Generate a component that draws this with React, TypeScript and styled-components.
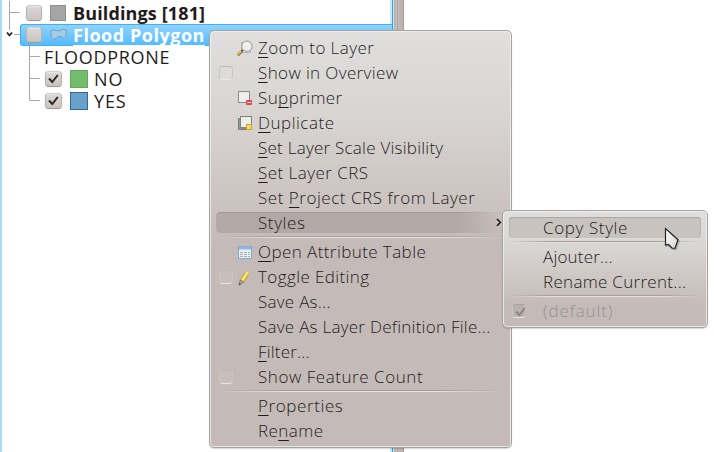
import React from 'react';
import styled, { createGlobalStyle, css } from 'styled-components';

const GlobalStyle = createGlobalStyle`
  * { box-sizing: border-box; }
  body { margin: 0; background: #fff; overflow: hidden; }
`;

const Desktop = styled.main`
  position: relative;
  display: flex;
  width: 714px;
  height: 452px;
  overflow: hidden;
  background: #fff;
  color: #1f1c1b;
  font-family: 'Open Sans', 'Noto Sans', sans-serif;
  font-size: 17px;
`;

const LayerPanel = styled.section`
  width: 393px;
  height: 452px;
  padding-top: 2px;
  border-left: 2px solid #a4dbf8;
  border-right: 1px solid #2fa6e2;
  box-shadow: inset -2px 0 #c2e9fa;
`;

const Splitter = styled.div`
  width: 11px;
  background: linear-gradient(90deg, #dcd8d5 0 1px, #bcb3b0 1px 3px, #cbc3c0 3px 4px, #aaa19e 4px 5px, #c8c0bd 5px 6px, #bdb4b1 6px 10px, #a69e9b 10px);
`;

const TreeRow = styled.div`
  display: flex;
  align-items: center;
  height: 22px;
`;

const SelectedArea = styled.div`
  display: flex;
  align-items: center;
  flex: 1;
  height: 22px;
  padding-left: 5px;
  border-radius: 3px 0 0 3px;
  border: 1px solid #43aff0;
  border-right: 0;
  background: linear-gradient(#8ed3ff, #55bcfc);
`;

const Guide = styled.svg`
  flex: none;
  fill: none;
  stroke: #a9a9a9;
`;

const Box = styled.span<{ $small?: boolean; $gap: number }>`
  display: flex;
  flex: none;
  width: ${p => (p.$small ? 16 : 17)}px;
  height: 16px;
  margin-right: ${p => p.$gap}px;
  border: 1px solid #c2bebb;
  border-color: #d3d0ce #b9b4b1 #9f9996;
  border-radius: 4px;
  background: linear-gradient(#dbd8d5, #cac4c0);
  box-shadow: 0 0 1px #aaa, inset 0 1px #e8e6e4;
`;

const Swatch = styled.span<{ $fill: string; $edge: string; $size: number; $gap: number }>`
  flex: none;
  width: ${p => p.$size}px;
  height: ${p => p.$size}px;
  margin-right: ${p => p.$gap}px;
  border: 1px solid ${p => p.$edge};
  background: ${p => p.$fill};
`;

const TreeText = styled.span<{ $bold?: boolean; $track?: number }>`
  font-size: 18px;
  line-height: 22px;
  white-space: pre;
  font-weight: ${p => (p.$bold ? 700 : 400)};
  letter-spacing: ${p => p.$track ?? 0}px;
`;

const SelectedText = styled(TreeText)`
  height: 21px;
  margin-bottom: -1px;
  line-height: 20px;
  color: #fff;
  border-bottom: 1px solid #fff;
`;

const Menu = styled.div<{ $x: number; $y: number; $w: number; $h: number; $flat: number }>`
  position: absolute;
  left: ${p => p.$x}px;
  top: ${p => p.$y}px;
  width: ${p => p.$w}px;
  height: ${p => p.$h}px;
  padding: 5px 6px 3px;
  border: 1px solid #a5a3a2;
  border-radius: 5px;
  background: linear-gradient(#e0dfdd, #d8d4d1 ${p => p.$flat * 0.4}px, #c4bbb8 ${p => p.$flat}px);
  box-shadow: inset 0 0 0 1px rgba(244, 243, 242, 0.75), 0 1px 1px rgba(0, 0, 0, 0.16);
`;

const Row = styled.div<{ $state?: 'open' | 'hover'; $disabled?: boolean; $sub?: boolean }>`
  position: relative;
  display: grid;
  grid-template-columns: ${p => (p.$sub ? '34px 1fr' : '21px 21px 1fr 10px')};
  align-items: center;
  height: 25px;
  color: ${p => (p.$disabled ? '#98918e' : '#1f1c1b')};
  ${p => p.$state && css`
    &::before {
      content: '';
      position: absolute;
      inset: 1px 0 3px;
      border-radius: 4px;
      ${p.$state === 'open'
        ? css`
            background: #b2a9a6;
            box-shadow: inset 0 1px #a29a97, 0 1px #d5cfcc;
            mask-image: linear-gradient(90deg, #000 242px, transparent 288px);
          `
        : css`
            background: #c9c3c0;
            box-shadow: inset 0 1px #aca6a3, inset 1px 0 #bbb5b2, inset -1px 0 #bbb5b2, 0 1px #dfdcda;
          `}
    }
  `}
`;

const Slot = styled.span`
  display: flex;
  align-items: center;
`;

const Label = styled.span<{ $track: number }>`
  position: relative;
  line-height: 23px;
  padding-bottom: 2px;
  white-space: pre;
  font-weight: 300;
  letter-spacing: ${p => p.$track}px;
`;

const Mnemonic = styled.u`
  text-decoration: underline 1px;
  text-underline-offset: 3px;
  text-decoration-skip-ink: none;
`;

const Separator = styled.hr`
  width: 100%;
  height: 4px;
  margin: 0;
  border: 0;
  background:
    linear-gradient(90deg, transparent, #a69e9b 22%, #a69e9b 78%, transparent) 0 0 / 100% 1px no-repeat,
    linear-gradient(90deg, transparent, #e4e1df 22%, #e4e1df 78%, transparent) 0 1px / 100% 1px no-repeat;
`;

const MenuCheck = styled.span<{ $inset?: number; $filled?: boolean }>`
  display: flex;
  width: 14px;
  height: 14px;
  margin: 0 0 1px ${p => p.$inset ?? 3}px;
  border: 1px solid #c0bab7;
  border-color: ${p => (p.$filled ? '#aaa3a0' : '#bdb7b4')} #cbc6c3 #e9e6e4;
  border-radius: 4px;
  background: ${p => (p.$filled ? '#bab2af' : 'rgba(255, 255, 255, 0.06)')};
`;

const Glyph = styled.svg`
  display: block;
  position: relative;
  flex: none;
  overflow: visible;
`;

const Pointer = styled.svg`
  position: absolute;
  left: 663px;
  top: 225px;
  overflow: visible;
`;

const Tick = ({ color = '#292625' }: { color?: string }) => (
  <Glyph width="15" height="14" viewBox="0 0 15 14" fill="none">
    <path d="M3 6.5 L6.3 10 L11.8 3" stroke={color} strokeWidth="2" />
  </Glyph>
);

const icons: Record<string, React.ReactNode> = {
  zoom: (
    <>
      <rect x="4.5" y="1.5" width="9" height="10" fill="#e9e9e8" stroke="#b5b5b4" />
      <path d="M6 9 L4.4 10.6" stroke="#444" strokeWidth="2" />
      <path d="M4.5 10.5 L.8 14.2" stroke="#8f7030" strokeWidth="2.8" />
      <path d="M4.3 10.2 L.7 13.8" stroke="#efbd45" strokeWidth="1.6" />
      <circle cx="10" cy="5.2" r="5.2" fill="#eeeeed" fillOpacity=".9" stroke="#9b9b9a" />
      <path d="M7 4 Q8 1.8 10.5 1.7" stroke="#fff" fill="none" />
    </>
  ),
  remove: (
    <>
      <rect x="1.5" y=".5" width="11" height="11" fill="#eeeeed" stroke="#858a86" />
      <rect x="9" y="9" width="6" height="5" rx="1" fill="#ef4048" />
      <path d="M10 11.5 H14" stroke="#fff" />
    </>
  ),
  duplicate: (
    <>
      <path d="M1.5 2.5 H4 V12 H9 V13.5 H1.5Z" fill="#969b97" stroke="#777b78" />
      <rect x="3.5" y=".5" width="11" height="11" fill="#eeeeed" stroke="#7d827e" />
      <rect x="9.5" y="8.5" width="5" height="5" fill="#f2db70" stroke="#c9a41f" />
    </>
  ),
  table: (
    <>
      <rect x="1.5" y="1.5" width="13" height="12" fill="#f1f3f5" stroke="#79a9d3" />
      <path d="M2 3 H14" stroke="#8eb9df" strokeWidth="3" />
      <path d="M2 5 H14" stroke="#c8dfef" />
      <path d="M3 7.5H6 M7 7.5H10 M11 7.5H13 M3 9.5H6 M7 9.5H10 M11 9.5H13 M3 11.5H6 M7 11.5H10 M11 11.5H13" stroke="#9fabb5" />
    </>
  ),
  pencil: (
    <>
      <path d="M2 15 L3.5 10 L9 1 L12.5 3 L7 12Z" fill="#e3c832" stroke="#ad9940" strokeWidth=".7" />
      <path d="M5.2 10.5 L10.6 2" stroke="#fff18a" strokeWidth="1.5" />
      <path d="M2 15 L3.4 10 L7 12Z" fill="#aaa69c" stroke="#77736c" strokeWidth=".7" />
      <path d="M9 1 L12.5 3 L11.8 4.2 L8.2 2.3Z" fill="#e3d9a3" />
      <path d="M1.5 15.5 L2.3 12.8 L4 14Z" fill="#555" />
    </>
  ),
};

type Entry = {
  pre?: string;
  key?: string;
  rest: string;
  track: number;
  icon?: string;
  check?: boolean;
  open?: boolean;
};

const groups: Entry[][] = [
  [
    { key: 'Z', rest: 'oom to Layer', track: 0.42, icon: 'zoom' },
    { key: 'S', rest: 'how in Overview', track: 0.38, check: true },
    { pre: 'Su', key: 'p', rest: 'primer', track: 0.4, icon: 'remove' },
    { key: 'D', rest: 'uplicate', track: 0.5, icon: 'duplicate' },
    { key: 'S', rest: 'et Layer Scale Visibility', track: 0.24 },
    { key: 'S', rest: 'et Layer CRS', track: 0.46 },
    { pre: 'Set ', key: 'P', rest: 'roject CRS from Layer', track: 0.53 },
    { rest: 'Styles', track: 0.6, open: true },
  ],
  [
    { key: 'O', rest: 'pen Attribute Table', track: 0.42, icon: 'table' },
    { rest: 'Toggle Editing', track: 0.4, icon: 'pencil', check: true },
    { rest: 'Save As...', track: 0.26 },
    { rest: 'Save As Layer Definition File...', track: 0.26 },
    { key: 'F', rest: 'ilter...', track: 0.2 },
    { rest: 'Show Feature Count', track: 0.55, check: true },
  ],
  [
    { key: 'P', rest: 'roperties', track: 0.6 },
    { pre: 'Re', key: 'n', rest: 'ame', track: 0.45 },
  ],
];

const MenuEntry = ({ e }: { e: Entry }) => (
  <Row $state={e.open ? 'open' : undefined}>
    <Slot>{e.check && <MenuCheck />}</Slot>
    <Slot>{e.icon && <Glyph width="16" height="16" viewBox="0 0 16 16">{icons[e.icon]}</Glyph>}</Slot>
    <Label $track={e.track}>
      {e.pre}
      {e.key && <Mnemonic>{e.key}</Mnemonic>}
      {e.rest}
    </Label>
    {e.open && (
      <Glyph width="7" height="10" viewBox="0 1 7 10" fill="none">
        <path d="M2 2.5 L5.5 6 L2 9.5" stroke="#e6e3e1" strokeWidth="1" />
        <path d="M2 1 L5.3 4.5 L2 8" stroke="#1f1c1b" strokeWidth="1.7" />
      </Glyph>
    )}
  </Row>
);

export default function App() {
  return (
    <Desktop>
      <GlobalStyle />
      <LayerPanel>
        <TreeRow>
          <Guide width="24" height="24" viewBox="2 1 24 24"><path d="M9.5 0 V25 M9.5 12.5 H20" /></Guide>
          <Box $gap={8} $small />
          <Swatch $fill="#a5a5a5" $edge="#8f8f8f" $size={16} $gap={7} />
          <TreeText $bold $track={0.13}>Buildings [181]</TreeText>
        </TreeRow>
        <TreeRow>
          <Guide width="18" height="22" viewBox="2 24 18 22">
            <path d="M9.5 24 V30 M14 34.5 H20" />
            <path d="M7 32.5 L9.5 35.5 L12 32.5" stroke="#1f1c1b" strokeWidth="1.7" />
          </Guide>
          <SelectedArea>
            <Box $gap={8} $small />
            <Glyph width="23" height="14" viewBox="0 0 23 14">
              <path d="M1 3 Q2 .8 6 2.5 Q9 3.5 11 2 Q14 0 16 2 Q17.5 4 15.5 6.5 Q17.5 9 14.5 10.5 Q12 10.5 11 8.5 Q7.5 7.5 6 10.5 Q3 12.5 1.5 9.5 Q.5 6 1 3Z" fill="#a6cce5" stroke="#6f9fbd" />
            </Glyph>
            <SelectedText $bold $track={0.53}>Flood Polygon</SelectedText>
          </SelectedArea>
        </TreeRow>
        <TreeRow>
          <Guide width="42" height="22" viewBox="2 46 42 22"><path d="M29.5 46 V68 M29.5 56.5 H40" /></Guide>
          <TreeText $track={0.7}>FLOODPRONE</TreeText>
        </TreeRow>
        <TreeRow>
          <Guide width="43" height="22" viewBox="2 68 43 22"><path d="M29.5 68 V90 M29.5 78.5 H40" /></Guide>
          <Box $gap={8}><Tick /></Box>
          <Swatch $fill="#74bd6d" $edge="#62a75c" $size={18} $gap={6} />
          <TreeText $track={0.9}>NO</TreeText>
        </TreeRow>
        <TreeRow>
          <Guide width="43" height="22" viewBox="2 90 43 22"><path d="M29.5 90 V100.5 H40" /></Guide>
          <Box $gap={8}><Tick /></Box>
          <Swatch $fill="#67a1cc" $edge="#33688f" $size={18} $gap={6} />
          <TreeText $track={0.9}>YES</TreeText>
        </TreeRow>
      </LayerPanel>
      <Splitter />

      <Menu $x={209} $y={30} $w={303} $h={418} $flat={215}>
        {groups.map((group, i) => (
          <React.Fragment key={i}>
            {i > 0 && <Separator />}
            {group.map(e => <MenuEntry key={(e.key ?? '') + e.rest} e={e} />)}
          </React.Fragment>
        ))}
      </Menu>

      <Menu $x={502} $y={210} $w={206} $h={118} $flat={95}>
        <Row $sub $state="hover"><Slot /><Label $track={0.62}>Copy Style</Label></Row>
        <Separator />
        <Row $sub><Slot /><Label $track={0.18}>Ajouter...</Label></Row>
        <Row $sub><Slot /><Label $track={0.3}>Rename Current...</Label></Row>
        <Separator />
        <Row $sub $disabled>
          <Slot><MenuCheck $inset={3} $filled><Tick color="#8a8380" /></MenuCheck></Slot>
          <Label $track={0.88}>(default)</Label>
        </Row>
      </Menu>

      <Pointer width="20" height="28" viewBox="0 0 20 28">
        <defs>
          <linearGradient id="pointerFill" x1="0" y1="0" x2="1" y2="1">
            <stop offset="0" stopColor="#fff" />
            <stop offset="1" stopColor="#d5d5d5" />
          </linearGradient>
        </defs>
        <path d="M3.5 5 V21 L6 20.5 L9.5 24 L13 24.5 L16 16Z" fill="none" stroke="#000" strokeOpacity=".18" strokeWidth="2" />
        <path d="M2.5 3.5 V20 L5.5 19.5 L9 23 L12 23.3 L15 14.8Z" fill="url(#pointerFill)" stroke="#222" strokeWidth="1.2" />
      </Pointer>
    </Desktop>
  );
}
